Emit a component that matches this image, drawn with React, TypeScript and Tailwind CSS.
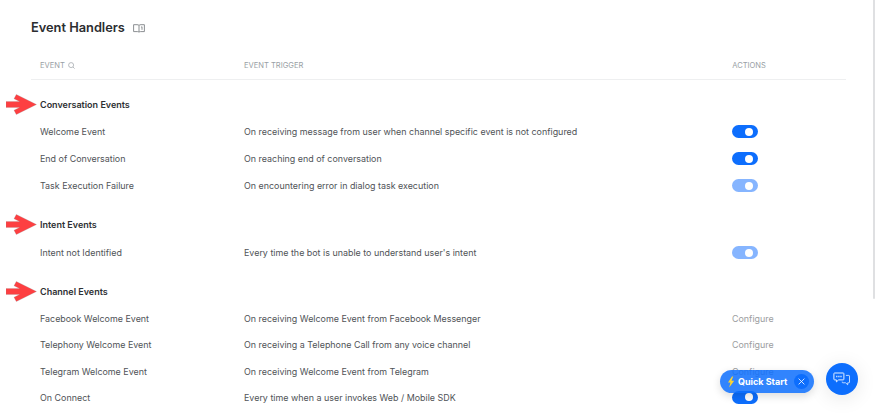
type Action = "on" | "disabled" | "configure";

interface EventRow {
  name: string;
  trigger: string;
  action: Action;
}

interface Section {
  title: string;
  rows: EventRow[];
  rowHeight: string;
  spacing: string;
}

const sections: Section[] = [
  {
    title: "Conversation Events",
    spacing: "pt-[11px]",
    rowHeight: "h-[27px]",
    rows: [
      { name: "Welcome Event", trigger: "On receiving message from user when channel specific event is not configured", action: "on" },
      { name: "End of Conversation", trigger: "On reaching end of conversation", action: "on" },
      { name: "Task Execution Failure", trigger: "On encountering error in dialog task execution", action: "disabled" },
    ],
  },
  {
    title: "Intent Events",
    spacing: "pt-3",
    rowHeight: "h-[29px]",
    rows: [{ name: "Intent not Identified", trigger: "Every time the bot is unable to understand user's intent", action: "disabled" }],
  },
  {
    title: "Channel Events",
    spacing: "pt-[11px]",
    rowHeight: "h-[26.4px]",
    rows: [
      { name: "Facebook Welcome Event", trigger: "On receiving Welcome Event from Facebook Messenger", action: "configure" },
      { name: "Telephony Welcome Event", trigger: "On receiving a Telephone Call from any voice channel", action: "configure" },
      { name: "Telegram Welcome Event", trigger: "On receiving Welcome Event from Telegram", action: "configure" },
      { name: "On Connect", trigger: "Every time when a user invokes Web / Mobile SDK", action: "on" },
    ],
  },
];

function Arrow() {
  return (
    <svg width="31" height="21" viewBox="0 0 31 21" className="shrink-0">
      <path
        d="M0 7.6H13.6L8 4.8L10.3 0.4L30.5 10.5L10.3 20.6L8 16.2L13.6 13.4H0Z"
        fill="#fd3f41"
        stroke="#8b8f94"
        strokeOpacity="0.45"
        strokeWidth="0.5"
      />
    </svg>
  );
}

function Toggle({ disabled }: { disabled: boolean }) {
  return (
    <span className={`flex h-[13px] w-[26px] items-center justify-end rounded-full pr-[5px] ${disabled ? "bg-[#86b5ff]" : "bg-[#0d6efd]"}`}>
      <span className="size-2 rounded-full bg-white" />
    </span>
  );
}

function BookIcon() {
  return (
    <svg width="12" height="9" viewBox="0 0 12 9" fill="none" stroke="#7f8387" strokeWidth="0.9">
      <path d="M6 1.4C5.5 0.8 4.8 0.7 4 0.7H0.6V7.6H4.6Q5.6 7.6 6 8.3Q6.4 7.6 7.4 7.6H11.4V0.7H8C7.2 0.7 6.5 0.8 6 1.4ZM6 1.4V8.2M8.2 3.2L9 2.7V5.8" />
    </svg>
  );
}

function ChatIcon() {
  return (
    <svg width="18" height="14" viewBox="0 0 18 14" fill="none" stroke="#e6f0ff" strokeWidth="1" strokeLinejoin="round">
      <path d="M1.6 1H10.2Q10.9 1 10.9 1.7V7.2Q10.9 7.9 10.2 7.9H5.6L3.4 9.9V7.9H1.6Q0.9 7.9 0.9 7.2V1.7Q0.9 1 1.6 1Z" />
      <path d="M12.9 3.4H15.8Q16.5 3.4 16.5 4.1V10.1Q16.5 10.8 15.8 10.8H14.7V12.8L12.6 10.8H9.9Q9.2 10.8 9.2 10.1V9.6" strokeOpacity="0.8" />
      <path d="M3.2 4.5H4.4M5.3 4.5H6.5M7.4 4.5H8.6" strokeWidth="1.3" />
    </svg>
  );
}

export default function App() {
  return (
    <div className="relative flex h-[414px] w-[878px] overflow-hidden bg-white font-['Inter','Liberation_Sans',sans-serif] text-[8.91px] text-[#505357]">
      <main className="w-[846px] shrink-0">
        <header className="flex h-[52px] items-center gap-2 pt-[4px] pl-[31px]">
          <h1 className="text-[12.8px] font-semibold text-[#2b2d30]">Event Handlers</h1>
          <BookIcon />
        </header>
        <div className="ml-[31px] flex h-7 items-center border-b border-[#eeeff0] pl-[9px] text-[7.55px] text-[#9a9fa5]">
          <div className="flex w-[204px] items-center gap-[3px]">
            <span>EVENT</span>
            <svg width="7" height="7" viewBox="0 0 7 7" fill="none" stroke="#9a9fa5" strokeWidth="0.7">
              <circle cx="3.1" cy="3.1" r="2.5" />
              <path d="M5 5L6.6 6.6" />
            </svg>
          </div>
          <div className="w-[488.2px]">EVENT TRIGGER</div>
          <div>ACTIONS</div>
        </div>
        {sections.map((section) => (
          <section key={section.title} className={section.spacing}>
            <div className="flex h-[27px] items-center">
              <div className="flex w-10 pl-[6px]">
                <Arrow />
              </div>
              <h2 className="pt-px text-[9px] font-semibold text-[#2e3033]">{section.title}</h2>
            </div>
            {section.rows.map((row) => (
              <div key={row.name} className={`flex items-center pl-10 whitespace-nowrap ${section.rowHeight}`}>
                <div className="w-[204px] shrink-0 pt-px">{row.name}</div>
                <div className="w-[488px] shrink-0 pt-px">{row.trigger}</div>
                {row.action === "configure" ? <span className="pt-px text-[#9b9da0]">Configure</span> : <Toggle disabled={row.action === "disabled"} />}
              </div>
            ))}
          </section>
        ))}
      </main>
      <div className="ml-[27px] h-[299px] w-[2px] rounded-b-full bg-[#dfe0e2]" />

      <div className="absolute top-[370px] left-[720px] flex h-[23px] w-[94px] items-center rounded-full bg-[#0d6efd]/85 pl-[7px] text-white shadow-[0_3px_9px_rgba(0,0,0,0.14)]">
        <svg width="8" height="12" viewBox="0 0 8 12" className="shrink-0">
          <path d="M5 0.5L1 6.5H3.4L2.2 11.5L7.2 4.8H4.5L6.2 0.5Z" fill="#ffd52e" />
        </svg>
        <span className="ml-[3px] w-[50px] text-[9px] font-bold whitespace-nowrap">Quick Start</span>
        <span className="ml-[6px] flex size-[15px] shrink-0 items-center justify-center rounded-full bg-[#0d6efd]">
          <svg width="7" height="7" viewBox="0 0 7 7" stroke="#fff" strokeWidth="0.8">
            <path d="M0.6 0.6L6.4 6.4M6.4 0.6L0.6 6.4" />
          </svg>
        </span>
      </div>
      <div className="absolute top-[363px] left-[826px] flex size-8 items-center justify-center rounded-full bg-[#0d6efd] shadow-[0_3px_20px_rgba(0,0,0,0.1)]">
        <ChatIcon />
      </div>
    </div>
  );
}
